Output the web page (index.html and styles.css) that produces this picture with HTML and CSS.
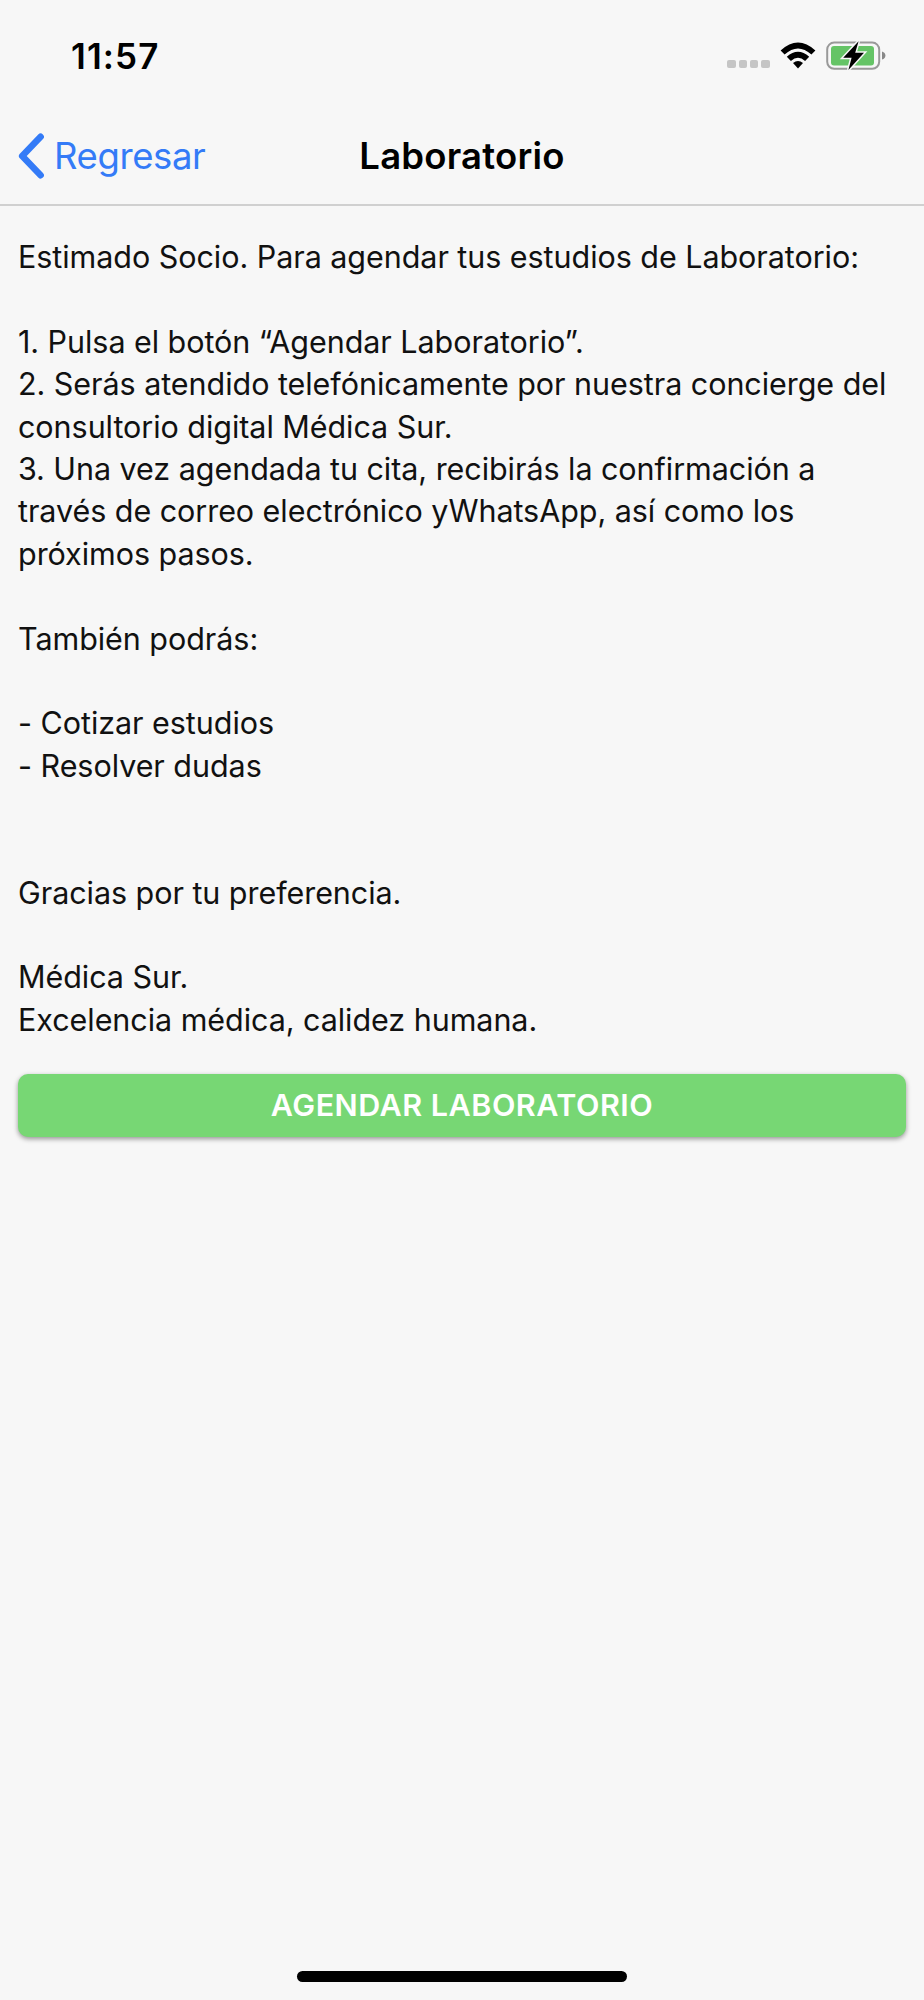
FILE: index.html
```html
<!DOCTYPE html>
<html lang="es">
<head>
	<meta charset="UTF-8">
	<title>Laboratorio</title>
	<link rel="stylesheet" href="styles.css">
</head>
<body>
	<div class="screen">
		<!-- barra de estado -->
		<div class="status">
			<span class="time">11:57</span>
			<div class="status-icons">
				<div class="signal"><i></i><i></i><i></i><i></i></div>
				<svg class="wifi" width="36" height="28" viewBox="0 0 36 28">
					<path d="M0.6 8.6 Q18 -7.4 35.4 8.6 L31.4 12.6 Q18 0.6 4.6 12.6 Z"></path>
					<path d="M6.8 14.8 Q18 4.8 29.2 14.8 L25.1 18.9 Q18 12.5 10.9 18.9 Z"></path>
					<path d="M13 21 Q18 17 23 21 L18 26.6 Z"></path>
				</svg>
				<svg class="battery" width="60" height="32" viewBox="0 0 60 32">
					<rect class="case" x="1.2" y="2.6" width="52" height="26.2" rx="7"></rect>
					<rect class="level" x="5" y="6.1" width="43" height="19.3" rx="3"></rect>
					<path class="tip" d="M56 11.6 Q59.4 12.6 59.4 15.6 Q59.4 18.6 56 19.6 Z"></path>
					<path class="bolt" d="M32.6 1.2 L17.2 17.8 H25.6 L22.4 30 L38 12.8 H29.2 Z"></path>
				</svg>
			</div>
		</div>
		<!-- encabezado -->
		<div class="header">
			<a class="back">
				<svg width="28" height="46" viewBox="0 0 28 46">
					<path d="M23.6 3.8 L5.2 23 L23.6 42.2"></path>
				</svg>
				<span>Regresar</span>
			</a>
			<h1 class="title">Laboratorio</h1>
		</div>
		<!-- contenido -->
		<div class="content">
			<div class="text">
				<p>Estimado Socio. Para agendar tus estudios de Laboratorio:</p>
				<p>1. Pulsa el botón “Agendar Laboratorio”.<br>
				2. Serás atendido telefónicamente por nuestra concierge del<br>
				consultorio digital Médica Sur.<br>
				3. Una vez agendada tu cita, recibirás la confirmación a<br>
				través de correo electrónico yWhatsApp, así como los<br>
				próximos pasos.</p>
				<p>También podrás:</p>
				<p class="options">- Cotizar estudios<br>
				- Resolver dudas</p>
				<p>Gracias por tu preferencia.</p>
				<p>Médica Sur.<br>
				Excelencia médica, calidez humana.</p>
			</div>
			<button class="btn">AGENDAR LABORATORIO</button>
		</div>
		<div class="home"></div>
	</div>
</body>
</html>
```
FILE: styles.css
```css
body{
	margin: 0;
	background-color: #f7f7f7;
	font-family: Inter, "Liberation Sans", sans-serif;
	color: #111;
}
.screen{
	display: flex;
	flex-direction: column;
	box-sizing: border-box;
	height: 2000px;
	padding-bottom: 18px;
}
.status{
	display: flex;
	justify-content: space-between;
	align-items: center;
	box-sizing: border-box;
	height: 111px;
	padding: 0 38px 0 71px;
}
.time{
	font-size: 35px;
	font-weight: 600;
	letter-spacing: 1.1px;
	color: #000;
}
.status-icons{
	display: flex;
	align-items: center;
}
.signal{
	display: flex;
	gap: 3px;
	padding-top: 17px;
	margin-right: 10.5px;
}
.signal i{
	width: 8.3px;
	height: 8px;
	border-radius: 2px;
	background-color: #c5c5c5;
}
.wifi{
	margin-right: 10px;
}
.battery .case{
	fill: none;
	stroke: #999;
	stroke-width: 2;
}
.battery .level{
	fill: #65c466;
}
.battery .tip{
	fill: #888;
}
.battery .bolt{
	fill: #000;
	stroke: #f7f7f7;
	stroke-width: 3;
	paint-order: stroke;
}
.header{
	display: grid;
	grid-template-columns: 1fr auto 1fr;
	align-items: center;
	box-sizing: border-box;
	height: 95px;
	padding: 0 17px 3px;
	border-bottom: 2px solid #d0d0d0;
}
.back{
	display: flex;
	align-items: center;
	gap: 9px;
	font-size: 36.5px;
	letter-spacing: -0.4px;
	color: #347bf7;
}
.back path{
	fill: none;
	stroke: #347bf7;
	stroke-width: 6.6;
	stroke-linecap: round;
	stroke-linejoin: round;
}
.title{
	margin: 0;
	font-size: 36.5px;
	font-weight: 600;
	letter-spacing: 0.2px;
	color: #000;
}
.content{
	flex: 1;
	padding: 30.2px 18px 0;
}
.text{
	font-size: 30.5px;
	line-height: 42.37px;
	letter-spacing: -0.05px;
	white-space: nowrap;
}
.text p{
	margin: 0 0 42.37px;
}
.text .options{
	margin-bottom: 84.74px;
}
.text p:last-child{
	margin-bottom: 32.3px;
}
.btn{
	display: block;
	width: 100%;
	height: 63px;
	padding: 0 0 1px;
	border: none;
	border-radius: 10px;
	background-color: #77d774;
	box-shadow: 0 2px 5px rgba(0,0,0,.4);
	font-family: inherit;
	font-size: 30.5px;
	font-weight: 600;
	letter-spacing: 0.5px;
	color: #fff;
}
.home{
	align-self: center;
	width: 330px;
	height: 11px;
	border-radius: 6px;
	background-color: #000;
}
```
